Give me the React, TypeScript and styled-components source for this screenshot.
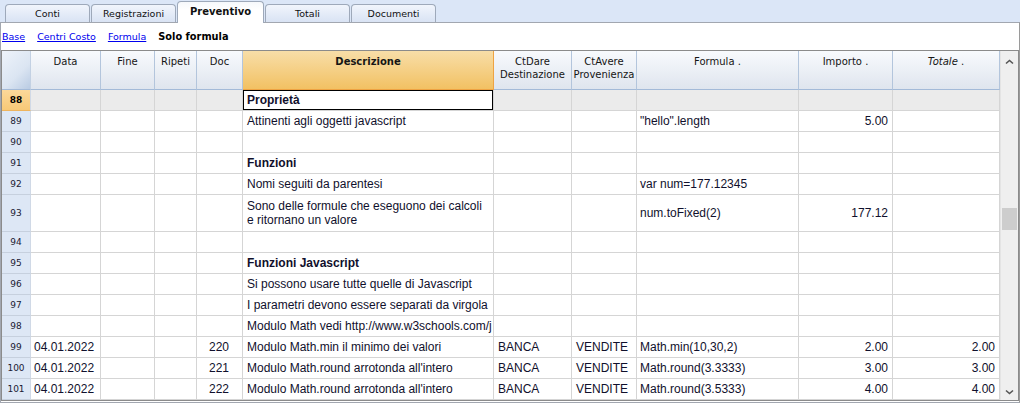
import React from "react"
import styled, { createGlobalStyle, css } from "styled-components"

const GlobalStyle = createGlobalStyle`
    html, body {
        margin: 0;
        padding: 0;
        background: #ffffff;
    }
`

const UI_FONT = `"DejaVu Sans", "Liberation Sans", sans-serif`
const CELL_FONT = `"Liberation Sans", Arial, sans-serif`

const COLUMNS = "29px 70px 54px 42px 46px 251px 78px 65px 162px 94px 107px"

const Root = styled.div`
    width: 1020px;
    height: 404px;
    overflow: hidden;
    background: #ffffff;
    font-family: ${UI_FONT};
`

const TabBar = styled.div`
    height: 22px;
    display: flex;
    align-items: flex-end;
    column-gap: 1px;
    padding-left: 5px;
    background: #dbe6f7;
`

const Tab = styled.div<{ $active?: boolean }>`
    width: 85px;
    height: 18px;
    box-sizing: border-box;
    display: flex;
    align-items: center;
    justify-content: center;
    border: 1px solid #9ea9ba;
    border-bottom: none;
    border-radius: 4px 4px 0 0;
    background: linear-gradient(#f1f5fc, #d9e3f4);
    font-size: 9.5px;
    color: #111111;

    ${(p) => p.$active && css`
        width: 87px;
        height: 22px;
        margin-bottom: -1px;
        position: relative;
        z-index: 1;
        background: linear-gradient(#f6f8fb, #ffffff 40%);
        font-weight: 700;
        font-size: 10px;
        padding-bottom: 2px;
    `}
`

const Panel = styled.div`
    height: 381px;
    box-sizing: border-box;
    border: 1px solid #a2a7b0;
    border-right-color: #9a9a9a;
    display: flex;
    flex-direction: column;
`

const Links = styled.div`
    height: 27px;
    display: flex;
    align-items: center;
    column-gap: 12px;
    padding-left: 1px;
    font-size: 9.5px;
`

const Link = styled.span`
    color: #0000ee;
    text-decoration: underline;
`

const Current = styled.span`
    color: #000000;
    font-weight: 700;
    font-size: 9.8px;
`

const GridFrame = styled.div`
    display: flex;
    border: 1px solid #8b8b8b;
    margin-bottom: 1px;
`

const Table = styled.div`
    display: flex;
    flex-direction: column;
    width: 998px;
`

const Row = styled.div<{ $height: number }>`
    display: grid;
    grid-template-columns: ${COLUMNS};
    height: ${(p) => p.$height}px;
`

const HeadCell = styled.div<{ $accent?: boolean; $corner?: boolean }>`
    box-sizing: border-box;
    padding-top: 4px;
    text-align: center;
    font-size: 10px;
    line-height: 13px;
    color: #151515;
    background: linear-gradient(#f8fafd, #dfe5ee);
    border-right: 1px solid #b3c5dc;
    border-bottom: 1px solid #a3bad8;

    ${(p) => p.$accent && css`
        background: linear-gradient(#f8dea8, #f2c163);
        border-right-color: #eea343;
        border-bottom-color: #eea343;
        font-weight: 700;
    `}

    ${(p) => p.$corner && css`
        background: linear-gradient(135deg, #eef3fa, #dbe5f2 60%, #b9cbe3);
        border-right-color: #c3d1e3;
    `}
`

const Cell = styled.div<{ $align?: "left" | "right"; $pad?: number; $bold?: boolean; $gray?: boolean; $cursor?: boolean }>`
    box-sizing: border-box;
    display: flex;
    flex-direction: column;
    justify-content: center;
    align-items: ${(p) => (p.$align === "right" ? "flex-end" : "flex-start")};
    padding: 0 ${(p) => (p.$align === "right" ? p.$pad ?? 4 : 4)}px 0 ${(p) => (p.$align === "right" ? 4 : p.$pad ?? 4)}px;
    overflow: hidden;
    white-space: nowrap;
    font-family: ${CELL_FONT};
    font-size: 12px;
    line-height: 14px;
    font-weight: ${(p) => (p.$bold ? 700 : 400)};
    color: #10102c;
    background: ${(p) => (p.$gray ? "#ebebeb" : "#ffffff")};
    border-right: 1px solid #d5d5d5;
    border-bottom: 1px solid #d5d5d5;

    ${(p) => p.$cursor && css`
        background: #ffffff;
        box-shadow: inset 0 0 0 1px #000000;
    `}
`

const RowNum = styled.div<{ $active?: boolean }>`
    box-sizing: border-box;
    display: flex;
    align-items: center;
    justify-content: center;
    font-size: 9px;
    color: #1a1a33;
    background: #dde7f5;
    border-right: 1px solid #d0d9e6;
    border-bottom: 1px solid #c6d0de;

    ${(p) => p.$active && css`
        background: linear-gradient(#fbd89a, #f7c977);
        border-bottom-color: #eeb45e;
        font-weight: 700;
        color: #000000;
    `}
`

const ScrollBar = styled.div`
    width: 18px;
    box-sizing: border-box;
    display: flex;
    flex-direction: column;
    background: #efefef;
    border-left: 1px solid #e4e4e4;
`

const ArrowButton = styled.div<{ $height: number }>`
    height: ${(p) => p.$height}px;
    display: flex;
    align-items: center;
    justify-content: center;
`

const Track = styled.div`
    flex: 1;
    display: flex;
    flex-direction: column;
`

const Thumb = styled.div<{ $offset: number }>`
    margin-top: ${(p) => p.$offset}px;
    height: 22px;
    margin-left: 1px;
    width: 15px;
    background: #cdcdcd;
`

const Chevron = ({ down }: { down?: boolean }) => (
    <svg width="9" height="6" viewBox="0 0 9 6">
        <polyline
            points={down ? "1,1.5 4.5,4.5 8,1.5" : "1,4.5 4.5,1.5 8,4.5"}
            fill="none"
            stroke="#555555"
            strokeWidth="1.6"
        />
    </svg>
)

interface IRow {
    n: number
    data?: string
    doc?: string
    desc?: string | string[]
    dare?: string
    avere?: string
    formula?: string
    importo?: string
    totale?: string
    bold?: boolean
    selected?: boolean
}

const rows: IRow[] = [
    { n: 88, desc: "Proprietà", bold: true, selected: true },
    { n: 89, desc: "Attinenti agli oggetti javascript", formula: "\"hello\".length", importo: "5.00" },
    { n: 90 },
    { n: 91, desc: "Funzioni", bold: true },
    { n: 92, desc: "Nomi seguiti da parentesi", formula: "var num=177.12345" },
    { n: 93, desc: ["Sono delle formule che eseguono dei calcoli", "e ritornano un valore"], formula: "num.toFixed(2)", importo: "177.12" },
    { n: 94 },
    { n: 95, desc: "Funzioni Javascript", bold: true },
    { n: 96, desc: "Si possono usare tutte quelle di Javascript" },
    { n: 97, desc: "I parametri devono essere separati da virgola" },
    { n: 98, desc: "Modulo Math vedi http://www.w3schools.com/j" },
    { n: 99, data: "04.01.2022", doc: "220", desc: "Modulo Math.min il minimo dei valori", dare: "BANCA", avere: "VENDITE", formula: "Math.min(10,30,2)", importo: "2.00", totale: "2.00" },
    { n: 100, data: "04.01.2022", doc: "221", desc: "Modulo Math.round arrotonda all'intero", dare: "BANCA", avere: "VENDITE", formula: "Math.round(3.3333)", importo: "3.00", totale: "3.00" },
    { n: 101, data: "04.01.2022", doc: "222", desc: "Modulo Math.round arrotonda all'intero", dare: "BANCA", avere: "VENDITE", formula: "Math.round(3.5333)", importo: "4.00", totale: "4.00" },
]

const tabs = ["Conti", "Registrazioni", "Preventivo", "Totali", "Documenti"]

const App: React.FC = () => {
    return (
        <Root>
            <GlobalStyle />
            <TabBar>
                {tabs.map((t) => (
                    <Tab key={t} $active={t === "Preventivo"}>{t}</Tab>
                ))}
            </TabBar>
            <Panel>
                <Links>
                    <Link>Base</Link>
                    <Link>Centri Costo</Link>
                    <Link>Formula</Link>
                    <Current>Solo formula</Current>
                </Links>
                <GridFrame>
                    <Table>
                        <Row $height={39}>
                            <HeadCell $corner />
                            <HeadCell>Data</HeadCell>
                            <HeadCell>Fine</HeadCell>
                            <HeadCell>Ripeti</HeadCell>
                            <HeadCell>Doc</HeadCell>
                            <HeadCell $accent>Descrizione</HeadCell>
                            <HeadCell>CtDare<br />Destinazione</HeadCell>
                            <HeadCell>CtAvere<br />Provenienza</HeadCell>
                            <HeadCell>Formula .</HeadCell>
                            <HeadCell>Importo .</HeadCell>
                            <HeadCell><i>Totale</i> .</HeadCell>
                        </Row>
                        {rows.map((r) => {
                            const lines = Array.isArray(r.desc) ? r.desc : r.desc ? [r.desc] : []
                            const g = r.selected
                            return (
                                <Row key={r.n} $height={lines.length > 1 ? 37 : 21}>
                                    <RowNum $active={g}>{r.n}</RowNum>
                                    <Cell $gray={g} $pad={3}>{r.data}</Cell>
                                    <Cell $gray={g} />
                                    <Cell $gray={g} />
                                    <Cell $gray={g} $align="right" $pad={13}>{r.doc}</Cell>
                                    <Cell $gray={g} $bold={r.bold} $cursor={g}>
                                        {lines.map((l) => <span key={l}>{l}</span>)}
                                    </Cell>
                                    <Cell $gray={g}>{r.dare}</Cell>
                                    <Cell $gray={g}>{r.avere}</Cell>
                                    <Cell $gray={g} $pad={3}>{r.formula}</Cell>
                                    <Cell $gray={g} $align="right">{r.importo}</Cell>
                                    <Cell $gray={g} $align="right" $pad={4}>{r.totale}</Cell>
                                </Row>
                            )
                        })}
                    </Table>
                    <ScrollBar>
                        <ArrowButton $height={22}><Chevron /></ArrowButton>
                        <Track>
                            <Thumb $offset={135} />
                        </Track>
                        <ArrowButton $height={16}><Chevron down /></ArrowButton>
                    </ScrollBar>
                </GridFrame>
            </Panel>
        </Root>
    )
}

export default App
